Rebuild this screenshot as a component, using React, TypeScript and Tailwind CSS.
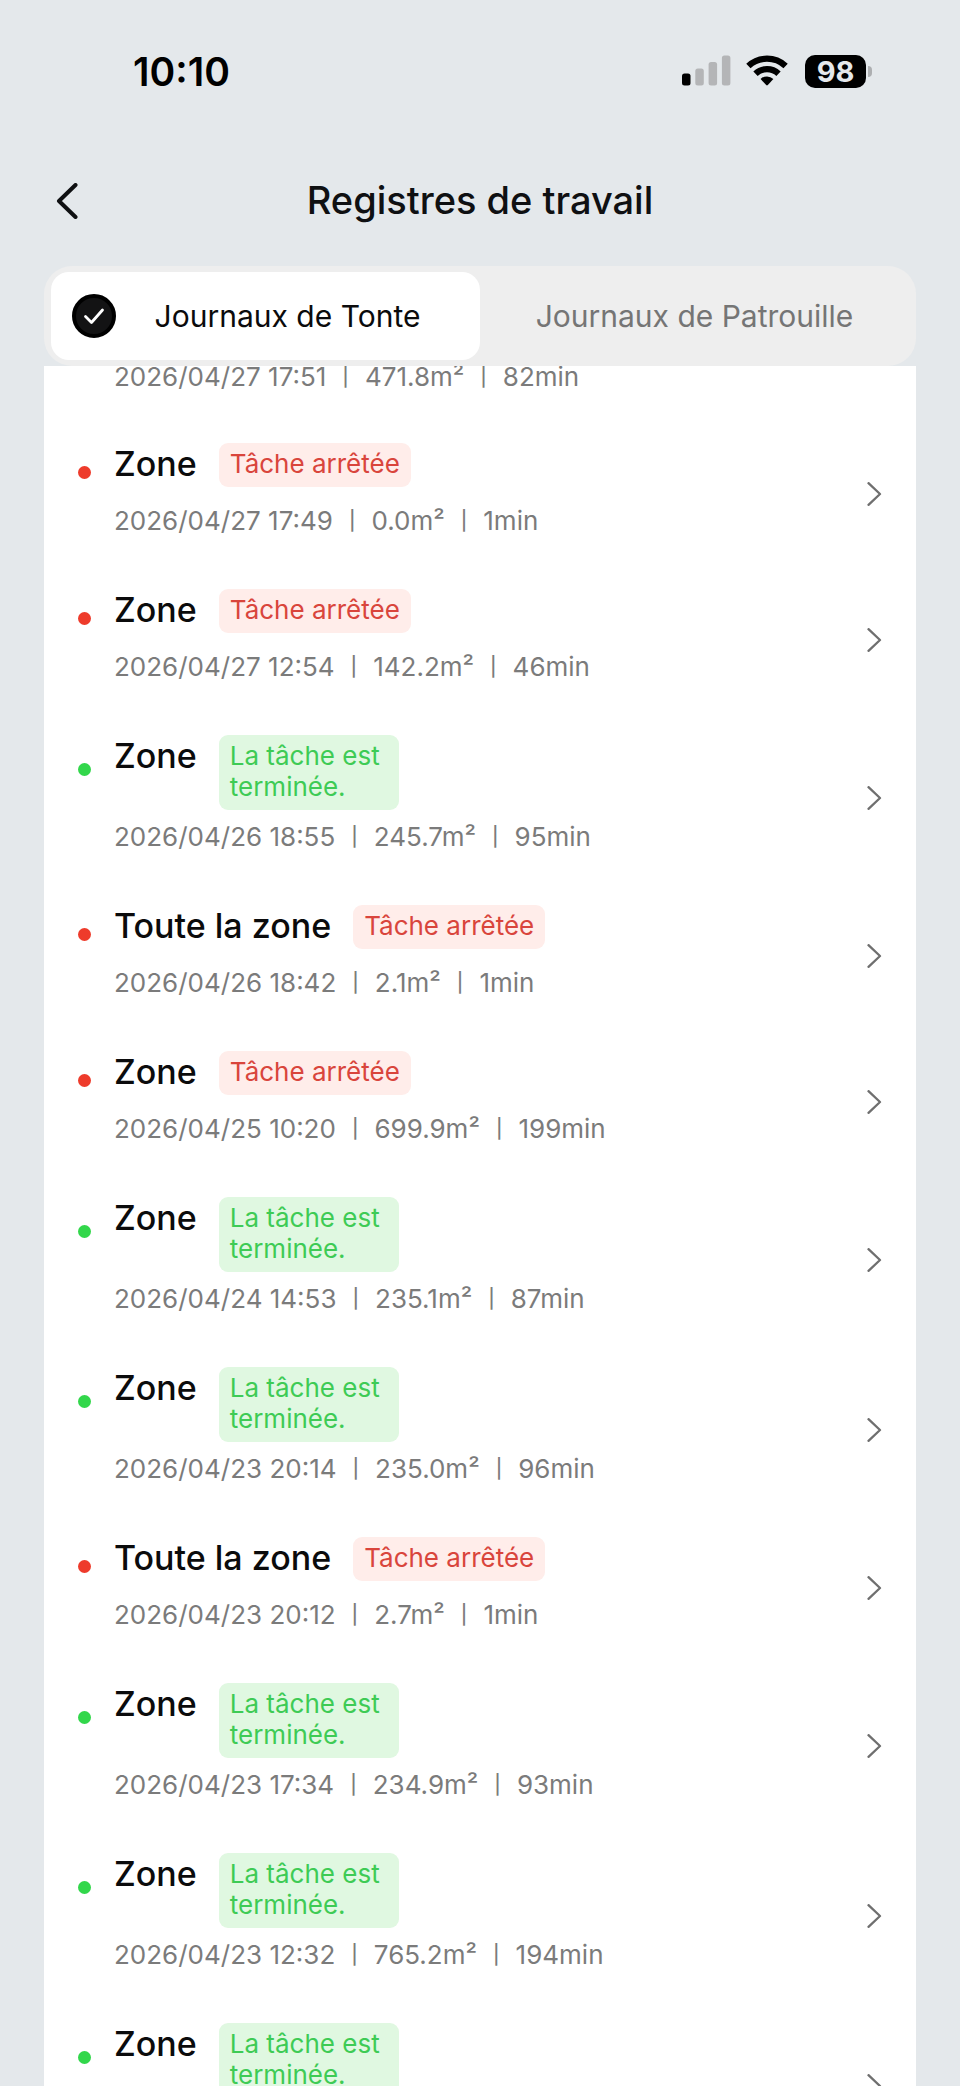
import clsx from "clsx";
import { useState } from "react";

type Status = "stopped" | "done";

type LogDetails = {
  date: string;
  area: string;
  duration: string;
};

type LogEntry = {
  id: number;
  name: string;
  status: Status;
  details?: LogDetails;
};

// Entry that is scrolled under the tabs, only its last line shows
const scrolledEntry: LogDetails = { date: "2026/04/27 17:51", area: "471.8m²", duration: "82min" };

const logs: LogEntry[] = [
  { id: 1, name: "Zone", status: "stopped", details: { date: "2026/04/27 17:49", area: "0.0m²", duration: "1min" } },
  { id: 2, name: "Zone", status: "stopped", details: { date: "2026/04/27 12:54", area: "142.2m²", duration: "46min" } },
  { id: 3, name: "Zone", status: "done", details: { date: "2026/04/26 18:55", area: "245.7m²", duration: "95min" } },
  { id: 4, name: "Toute la zone", status: "stopped", details: { date: "2026/04/26 18:42", area: "2.1m²", duration: "1min" } },
  { id: 5, name: "Zone", status: "stopped", details: { date: "2026/04/25 10:20", area: "699.9m²", duration: "199min" } },
  { id: 6, name: "Zone", status: "done", details: { date: "2026/04/24 14:53", area: "235.1m²", duration: "87min" } },
  { id: 7, name: "Zone", status: "done", details: { date: "2026/04/23 20:14", area: "235.0m²", duration: "96min" } },
  { id: 8, name: "Toute la zone", status: "stopped", details: { date: "2026/04/23 20:12", area: "2.7m²", duration: "1min" } },
  { id: 9, name: "Zone", status: "done", details: { date: "2026/04/23 17:34", area: "234.9m²", duration: "93min" } },
  { id: 10, name: "Zone", status: "done", details: { date: "2026/04/23 12:32", area: "765.2m²", duration: "194min" } },
  { id: 11, name: "Zone", status: "done" },
];

const statusLabel: Record<Status, string> = {
  stopped: "Tâche arrêtée",
  done: "La tâche est terminée.",
};

function StatusBar() {
  return (
    <div className="flex h-[142px] shrink-0 items-center justify-between pr-[88px] pl-[133px]">
      <span className="text-[39px] leading-none font-semibold text-black">10:10</span>
      <div className="flex items-center">
        <svg className="h-8 w-[49px]" viewBox="0 0 49 32" aria-hidden="true">
          <rect x="0" y="18.5" width="8.5" height="12" rx="2.5" fill="#000" />
          <rect x="13.3" y="13.5" width="8.5" height="17" rx="2.5" fill="#b4b5b7" />
          <rect x="26.6" y="7" width="8.5" height="23.5" rx="2.5" fill="#b4b5b7" />
          <rect x="39.9" y="0.5" width="8.5" height="30" rx="2.5" fill="#b4b5b7" />
        </svg>
        <svg className="ml-[15px] h-8 w-[42px]" viewBox="0 0 42 32" fill="none" aria-hidden="true">
          <path d="M2.4 11A27.3 27.3 0 0 1 39.6 11" stroke="#000" strokeWidth="6.3" />
          <path d="M9.5 18.7A16.8 16.8 0 0 1 32.5 18.7" stroke="#000" strokeWidth="6.3" />
          <path d="M14.6 23.9A9.4 9.4 0 0 1 27.4 23.9L21.8 30.1Q21 30.9 20.2 30.1Z" fill="#000" />
        </svg>
        <div className="ml-[17px] flex h-[33px] w-[61px] items-center justify-center rounded-[10px] bg-black text-[29px] leading-none font-bold text-[#e5e8eb]">
          98
        </div>
        <div className="ml-[2px] h-[11px] w-1 rounded-r-full bg-[#adafb1]" />
      </div>
    </div>
  );
}

function DetailsLine({ details }: { details: LogDetails }) {
  return (
    <>
      <span>{details.date}</span>
      <span className="text-[19px] font-medium">|</span>
      <span>{details.area}</span>
      <span className="text-[19px] font-medium">|</span>
      <span>{details.duration}</span>
    </>
  );
}

function LogRow({ entry }: { entry: LogEntry }) {
  const done = entry.status === "done";

  return (
    <li>
      <button type="button" className="flex w-full cursor-pointer items-center px-[34px] text-left">
        <span
          className={clsx(
            "size-[13px] shrink-0 self-start rounded-full",
            done ? "mt-[50px] bg-[#32d74b]" : "mt-[45px] bg-[#ee3b2b]",
          )}
        />
        <span className="ml-[23px] flex min-w-0 flex-1 flex-col gap-[11px] pt-[22px] pb-[30px]">
          <span className="flex min-h-[51px] items-start">
            <span className="text-[34px] leading-[42px] font-medium text-[#0b0b0c]">{entry.name}</span>
            <span
              className={clsx(
                "ml-[22px] rounded-[9px] px-[11px] pt-[5px] pb-[8px] text-[26px] leading-[31px]",
                done ? "w-[180px] bg-[#e0f8e1] text-[#3ecb55]" : "bg-[#ffedea] text-[#d9453c]",
              )}
            >
              {statusLabel[entry.status]}
            </span>
          </span>
          <span className="flex min-h-8 gap-4 text-[26px] leading-[32px] text-[#7b7b7b]">
            {entry.details && <DetailsLine details={entry.details} />}
          </span>
        </span>
        <svg className="h-6 w-4 shrink-0" viewBox="0 0 16 24" fill="none" aria-hidden="true">
          <path d="M2.5 1.2L14 12L2.5 22.8" stroke="#6f6f6f" strokeWidth="2.3" strokeLinecap="round" strokeLinejoin="round" />
        </svg>
      </button>
    </li>
  );
}

export default function App() {
  const [tab, setTab] = useState<"mowing" | "patrol">("mowing");

  const tabs = [
    { id: "mowing", label: "Journaux de Tonte" },
    { id: "patrol", label: "Journaux de Patrouille" },
  ] as const;

  return (
    <div className="flex h-screen flex-col overflow-hidden bg-[#e4e8eb] font-['Inter',sans-serif]">
      <StatusBar />

      {/* Title bar */}
      <header className="grid h-[124px] shrink-0 grid-cols-[80px_1fr_80px] items-start px-11 pt-[35px]">
        <button type="button" aria-label="Retour" className="flex h-12 items-center pl-3">
          <svg className="h-9 w-6" viewBox="0 0 24 36" fill="none" aria-hidden="true">
            <path d="M19.5 2L3 18L19.5 34" stroke="#0f1012" strokeWidth="4" strokeLinecap="round" strokeLinejoin="round" />
          </svg>
        </button>
        <h1 className="text-center text-[38px] leading-[46px] font-medium whitespace-nowrap text-[#0f1012]">
          Registres de travail
        </h1>
      </header>

      {/* Tabs */}
      <div role="tablist" className="mx-11 flex h-[100px] shrink-0 rounded-[28px] bg-[#eeeeee] px-[7px] py-[6px]">
        {tabs.map(({ id, label }) => {
          const active = tab === id;
          return (
            <button
              key={id}
              type="button"
              role="tab"
              aria-selected={active}
              onClick={() => setTab(id)}
              className={clsx(
                "flex flex-1 cursor-pointer items-center rounded-[18px] px-[21px] text-[30px]",
                active ? "bg-white text-[#0b0b0c]" : "text-[#757575]",
              )}
            >
              {active && (
                <svg className="size-11 shrink-0" viewBox="0 0 44 44" fill="none" aria-hidden="true">
                  <circle cx="22" cy="22" r="20" fill="#131314" stroke="#000" strokeWidth="4" />
                  <path d="M13.5 22.5L19.5 28.5L30.5 16" stroke="#fff" strokeWidth="2.8" strokeLinecap="round" strokeLinejoin="round" />
                </svg>
              )}
              <span className="flex-1 text-center whitespace-nowrap">{label}</span>
            </button>
          );
        })}
      </div>

      {/* Log list */}
      <main className="mx-11 min-h-0 flex-1 overflow-hidden bg-white">
        <div className="flex h-[55px] gap-4 pl-[70px] text-[26px] leading-[22px] text-[#7b7b7b]">
          <DetailsLine details={scrolledEntry} />
        </div>
        <ul>
          {logs.map((entry) => (
            <LogRow key={entry.id} entry={entry} />
          ))}
        </ul>
      </main>
    </div>
  );
}
